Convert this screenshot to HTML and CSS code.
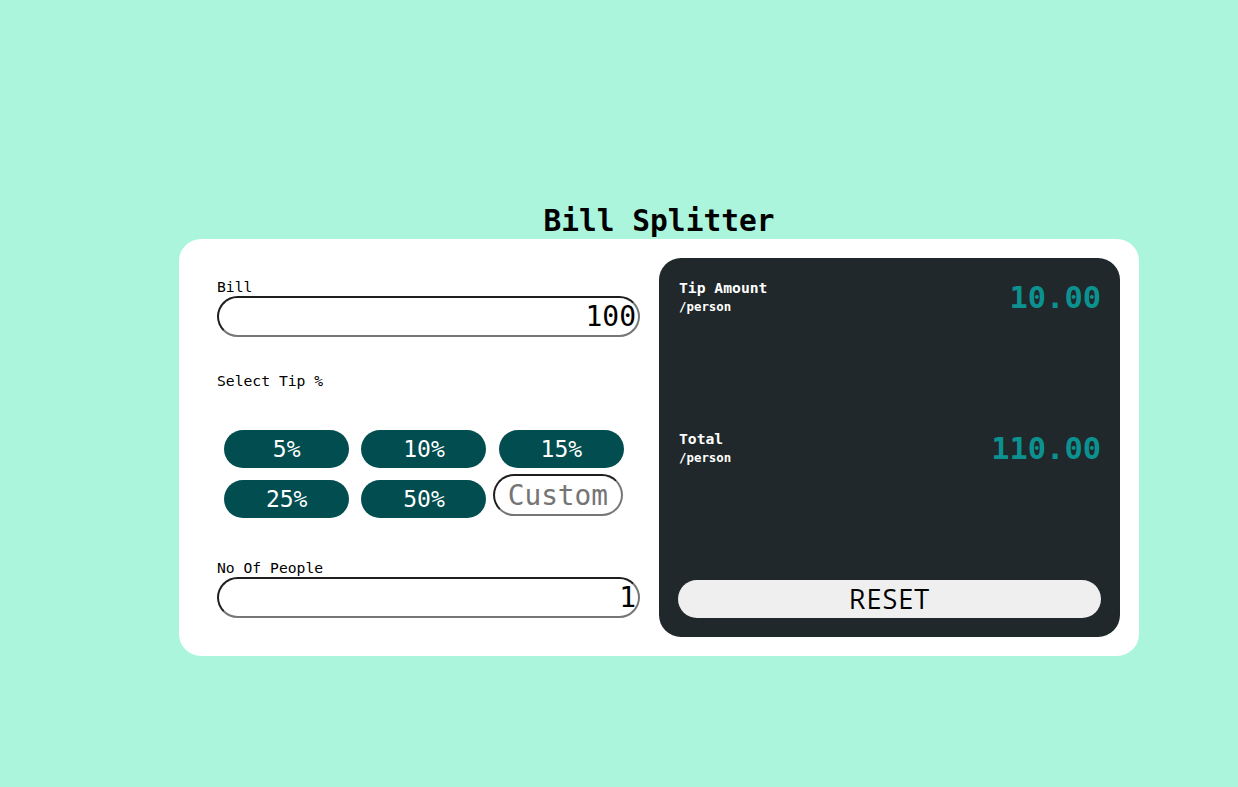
FILE: index.html
```html
<!DOCTYPE html>
<html>
<head>
<meta charset="utf-8">
<link rel="stylesheet" href="styles.css">
</head>
<body>
<div class="page">
  <h1 class="title">Bill Splitter</h1>
  <div class="card">
    <div class="inputs">
      <label class="label">Bill</label>
      <input class="field" type="text" value="100">
      <p class="tip-label">Select Tip %</p>
      <div class="tips">
        <button class="tip">5%</button>
        <button class="tip">10%</button>
        <button class="tip">15%</button>
        <button class="tip">25%</button>
        <button class="tip">50%</button>
        <input class="custom" type="text" placeholder="Custom">
      </div>
      <label class="label people-label">No Of People</label>
      <input class="field" type="text" value="1">
    </div>
    <div class="results">
      <div class="row">
        <div class="row-text">
          <div class="row-title">Tip Amount</div>
          <div class="row-sub">/person</div>
        </div>
        <div class="amount">10.00</div>
      </div>
      <div class="row">
        <div class="row-text">
          <div class="row-title">Total</div>
          <div class="row-sub">/person</div>
        </div>
        <div class="amount">110.00</div>
      </div>
      <button class="reset">RESET</button>
    </div>
  </div>
</div>
</body>
</html>
```
FILE: styles.css
```css
* { box-sizing: border-box; }
body {
  margin: 0;
  background: #acf5dd;
  font-family: "DejaVu Sans Mono", "Liberation Mono", monospace;
}
.page {
  padding: 205px 0 0 80px;
  display: flex;
  flex-direction: column;
  align-items: center;
}
.title {
  margin: 0;
  height: 34px;
  font-size: 29.5px;
  line-height: 32px;
  font-weight: bold;
  color: #000;
}
.card {
  width: 960px;
  background: #fff;
  border-radius: 22px;
  padding: 19px;
  display: grid;
  grid-template-columns: 442px 461px;
  column-gap: 19px;
}
.inputs {
  padding: 20px 0 0 19px;
  display: flex;
  flex-direction: column;
}
.label {
  display: block;
  font-size: 14.7px;
  line-height: 18px;
  color: #000;
}
.field {
  width: 423px;
  height: 41px;
  border-radius: 21px;
  border: 2px solid;
  border-color: #1e1e1e #767676 #767676 #1e1e1e;
  background: #fff;
  font-family: "DejaVu Sans Mono", monospace;
  font-size: 28px;
  text-align: right;
  padding: 0 2px 0 10px;
  color: #000;
  outline: none;
}
.tip-label {
  margin: 35px 0 0;
  font-size: 14.7px;
  line-height: 18px;
}
.tips {
  margin-top: 34px;
  margin-left: 1px;
  width: 412px;
  display: grid;
  grid-template-columns: repeat(3, 1fr);
  align-items: start;
}
.tip {
  justify-self: center;
  width: 125px;
  height: 38px;
  margin: 6px 0;
  border: none;
  border-radius: 19px;
  background: #014d4f;
  color: #fff;
  font-family: "DejaVu Sans Mono", monospace;
  font-size: 23px;
  padding: 0;
}
.custom {
  justify-self: start;
  width: 130px;
  height: 42px;
  border-radius: 21px;
  border: 2px solid;
  border-color: #1e1e1e #767676 #767676 #1e1e1e;
  font-family: "DejaVu Sans Mono", monospace;
  font-size: 27.8px;
  padding: 0 0 0 13px;
  outline: none;
}
.custom::placeholder { color: #757575; }
.people-label {
  margin-top: 35px;
}
.results {
  background: #20282b;
  border-radius: 22px;
  height: 379px;
  padding: 20px 19px 19px 19px;
  display: flex;
  flex-direction: column;
}
.row {
  display: flex;
  justify-content: space-between;
  align-items: flex-start;
  height: 152px;
  padding-left: 1px;
}
.row-title {
  color: #fff;
  font-weight: bold;
  font-size: 14.7px;
  line-height: 18px;
  padding-top: 1px;
}
.row-sub {
  color: #fff;
  font-weight: bold;
  font-size: 12.4px;
  line-height: 18px;
  margin-top: 1px;
}
.amount {
  color: #0b9290;
  font-weight: bold;
  font-size: 30.4px;
  line-height: 36px;
  padding-top: 2px;
}
.reset {
  margin-top: auto;
  height: 38px;
  width: 423px;
  border: none;
  border-radius: 19px;
  background: #efefef;
  color: #000;
  font-family: "Open Sans", "Noto Sans", sans-serif;
  font-size: 27px;
  letter-spacing: 1px;
  padding: 0;
  line-height: 38px;
}
```
